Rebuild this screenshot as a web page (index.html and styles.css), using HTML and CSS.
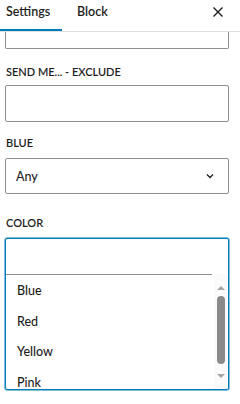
FILE: index.html
```html
<!DOCTYPE html>
<html>
<head>
<meta charset="utf-8">
<link rel="stylesheet" href="styles.css">
</head>
<body>
<div class="panel">
  <div class="tabs">
    <div class="tab active">Settings</div>
    <div class="tab">Block</div>
    <div class="close">
      <svg width="12" height="12" viewBox="0 0 12 12"><path d="M1.5 1.5 L10.5 10.5 M10.5 1.5 L1.5 10.5" stroke="#1e1e1e" stroke-width="1.4" fill="none"/></svg>
    </div>
  </div>
  <div class="content">
    <div class="input partial"></div>
    <div class="label l1">SEND ME... - EXCLUDE</div>
    <div class="input"></div>
    <div class="label l2">BLUE</div>
    <div class="select">
      <span>Any</span>
      <svg width="10" height="6" viewBox="0 0 10 6"><path d="M2 1.5 L5 4.5 L8 1.5" stroke="#1e1e1e" stroke-width="1.3" fill="none"/></svg>
    </div>
    <div class="label l3">COLOR</div>
    <div class="listbox">
      <div class="search"></div>
      <div class="listrow">
        <div class="items">
          <div class="item">Blue</div>
          <div class="item">Red</div>
          <div class="item">Yellow</div>
          <div class="item">Pink</div>
        </div>
        <div class="scrollbar">
          <div class="arrow up"></div>
          <div class="thumb"></div>
          <div class="arrow down"></div>
        </div>
      </div>
    </div>
  </div>
</div>
</body>
</html>
```

FILE: styles.css
```css
html, body {
  margin: 0;
  padding: 0;
  background: #fff;
}
body {
  width: 240px;
  height: 404px;
  overflow: hidden;
  font-family: "Lato", "Noto Sans", sans-serif;
  color: #1e1e1e;
}
.panel {
  display: flex;
  flex-direction: column;
}
.tabs {
  display: flex;
  height: 31px;
  border-bottom: 1px solid #e0e0e0;
  align-items: stretch;
}
.tab {
  font-size: 12.5px;
  font-weight: 600;
  padding: 4px 0 0 6px;
  box-sizing: border-box;
  line-height: 16px;
}
.tab.active {
  width: 62px;
  box-shadow: inset 0 -2px 0 #007cba;
}
.tab:nth-child(2) {
  padding-left: 15px;
}
.close {
  margin-left: auto;
  width: 34px;
  display: flex;
  justify-content: flex-start;
  padding: 6px 0 0 6px;
  box-sizing: border-box;
}
.content {
  display: flex;
  flex-direction: column;
  padding: 0 11px 0 5px;
}
.input {
  height: 37px;
  border: 1px solid #8c8f94;
  border-radius: 2px;
  box-sizing: border-box;
}
.input.partial {
  height: 17px;
  border-top: none;
  border-radius: 0 0 2px 2px;
}
.label {
  font-size: 11px;
  font-weight: 600;
  line-height: 14px;
  padding-left: 1px;
}
.l1 { margin-top: 16px; margin-bottom: 6px; }
.l2 { margin-top: 14px; margin-bottom: 8px; }
.l3 { margin-top: 22px; margin-bottom: 8px; }
.select {
  height: 36px;
  border: 1px solid #8c8f94;
  border-radius: 2px;
  box-sizing: border-box;
  display: flex;
  align-items: center;
  justify-content: space-between;
  padding: 0 13px 0 10px;
  font-size: 12.5px;
  font-weight: 500;
}
.listbox {
  height: 152px;
  border: 1px solid #007cba;
  box-shadow: 0 0 0 0.5px #007cba;
  border-radius: 2px;
  box-sizing: border-box;
  display: flex;
  flex-direction: column;
  overflow: hidden;
}
.search {
  height: 35px;
  flex: none;
  border-bottom: 1px solid #8c8f94;
  margin-right: 16px;
}
.listrow {
  display: flex;
  flex: 1;
  min-height: 0;
}
.items {
  flex: 1;
  display: flex;
  flex-direction: column;
  padding-top: 1px;
  padding-left: 11px;
  overflow: hidden;
}
.item {
  font-size: 12.5px;
  font-weight: 500;
  line-height: 16px;
  height: 30.5px;
  flex: none;
  display: flex;
  align-items: center;
}
.scrollbar {
  width: 13px;
  margin-right: 1px;
  display: flex;
  flex-direction: column;
  align-items: center;
  background: #fafafa;
  margin-top: -1px;
}
.arrow {
  width: 0;
  height: 0;
  border-left: 4px solid transparent;
  border-right: 4px solid transparent;
}
.arrow.up {
  margin-top: 12px;
  border-bottom: 4px solid #a3a3a3;
}
.arrow.down {
  margin-top: 10px;
  border-top: 4px solid #a3a3a3;
}
.thumb {
  margin-top: 6px;
  width: 8px;
  height: 68px;
  background: #8a8a8a;
  border-radius: 4px;
}
```
